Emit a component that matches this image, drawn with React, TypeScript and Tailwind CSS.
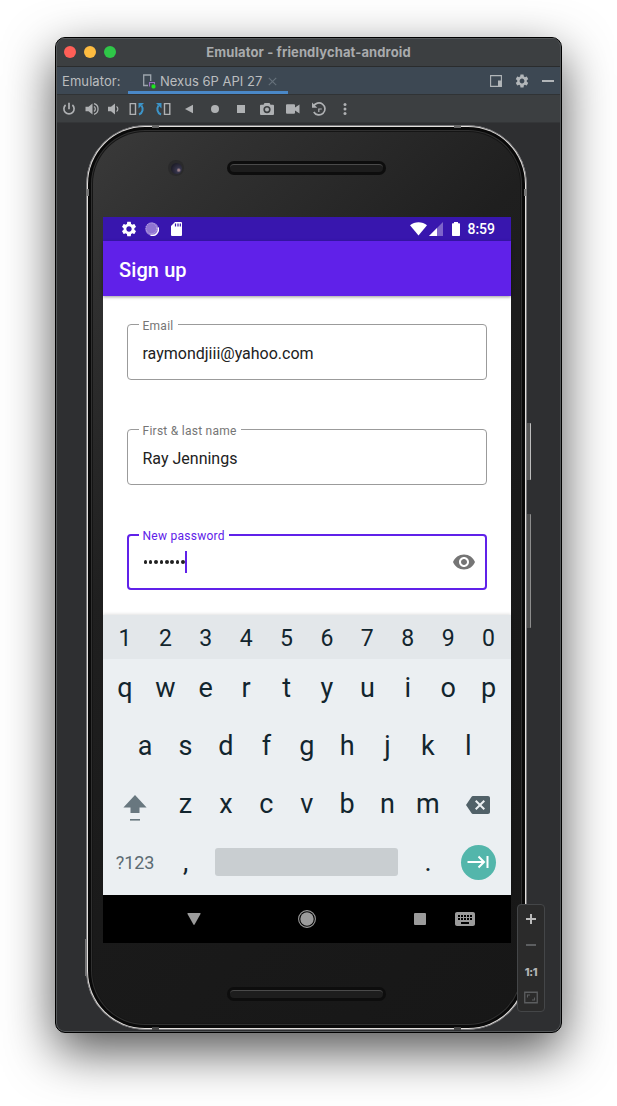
import type { ReactNode } from "react";
import { MdBackspace, MdKeyboard, MdSettings, MdVisibility } from "react-icons/md";

const inter = "font-['Inter','Liberation_Sans',sans-serif]";

function TitleBar() {
  return (
    <div className="flex h-[29px] shrink-0 items-center border-b border-[#2a2c2d] bg-[#3c3f41] shadow-[inset_0_1px_0_#55585a]">
      <div className="flex w-[68px] gap-2 pl-2">
        <span className="size-3 rounded-full bg-[#ff5f57]" />
        <span className="size-3 rounded-full bg-[#febc40]" />
        <span className="size-3 rounded-full bg-[#2fc748]" />
      </div>
      <div className="flex-1 pr-[68px] text-center text-[13px] leading-none font-bold tracking-[0.12px] whitespace-nowrap text-[#a9abad]">
        Emulator - friendlychat-android
      </div>
    </div>
  );
}

function TabBar() {
  return (
    <div className="flex h-[28px] shrink-0 items-center border-b border-[#303335] bg-[#3d4853] text-[13px] text-[#bbbdbf]">
      <span className="w-[72px] pt-[2px] pl-[6px] tracking-[0.08px]">Emulator:</span>
      <div className="flex h-full w-[160px] items-center border-b-[3px] border-[#4a88c7] pt-[5px] pl-[15px]">
        <svg width="13" height="15" viewBox="0 0 13 15" className="shrink-0">
          <path d="M5 11.5H.7V1h7v6" fill="none" stroke="#9da5ad" strokeWidth="1.3" />
          <path d="M6.5 12.5v-4h5v2" fill="none" stroke="#9a70c0" strokeWidth="1.1" />
          <rect x="8.5" y="10.5" width="4" height="4" rx="1.4" fill="#1ee61e" />
        </svg>
        <span className="ml-[4px] w-[103px] tracking-[0.01px] whitespace-nowrap">Nexus 6P API 27</span>
        <svg width="9" height="9" viewBox="0 0 8 8" className="ml-[5px]">
          <path d="M.7.7l6.6 6.6M7.3.7L.7 7.3" stroke="#66717b" strokeWidth="1" />
        </svg>
      </div>
      <div className="ml-auto flex items-center gap-[12px] pt-px pr-[7px]">
        <svg width="12" height="12" viewBox="0 0 12 12">
          <path d="M.6.6h10.8v10.8H.6z" fill="none" stroke="#b2b6b9" strokeWidth="1.1" />
          <path d="M8 5.5h3.5v6H8z" fill="#b2b6b9" />
        </svg>
        <MdSettings className="size-[16px] text-[#b2b6b9]" />
        <svg width="12" height="12" viewBox="0 0 12 12">
          <path d="M0 5h12v2H0z" fill="#b2b6b9" />
        </svg>
      </div>
    </div>
  );
}

function Tool({ children, gap = "w-[26px]" }: { children: ReactNode; gap?: string }) {
  return (
    <span className={`${gap} flex shrink-0 justify-center`}>
      <svg width="16" height="16" viewBox="0 0 16 16" fill="none" stroke="#afb1b3" strokeWidth="1.5">
        {children}
      </svg>
    </span>
  );
}

function Toolbar() {
  return (
    <div className="flex h-[28px] shrink-0 items-center border-b border-[#343638] bg-[#3c3f41]">
      <Tool>
        <path d="M4.600 4A5.100 5.100 0 1 0 11.400 4M8 1.800v6.400" strokeWidth="1.7" />
      </Tool>
      <Tool gap="w-[19px]">
        <path d="M1.500 5.800h3L8.500 2.500v11L4.500 10.200H1.500z" fill="#afb1b3" stroke="none" />
        <path d="M10 5.500a3 3 0 0 1 0 5M10 2.700a5.500 5.500 0 0 1 0 10.600" strokeWidth="1.3" />
      </Tool>
      <Tool gap="w-[24px]">
        <path d="M3 5.800h3L10 2.500v11L6 10.200H3z" fill="#afb1b3" stroke="none" />
        <path d="M11.500 5.500a3 3 0 0 1 0 5" strokeWidth="1.2" />
      </Tool>
      <Tool gap="w-[23px]">
        <path d="M1.200 2.600h5.300v10.800H1.200z" strokeWidth="1.4" />
        <path d="M10 13.500c4-1.500 4.500-6 2.500-9" stroke="#3c94c8" strokeWidth="2" />
        <path d="M9.500 2H15l-5.500 5.500z" fill="#3c94c8" stroke="none" />
      </Tool>
      <Tool gap="w-[30px]">
        <path d="M9.500 2.600h5.300v10.800H9.500z" strokeWidth="1.4" />
        <path d="M6 13.500C2 12 1.500 7.500 3.500 4.500" stroke="#3c94c8" strokeWidth="2" />
        <path d="M6.500 2H1l5.500 5.500z" fill="#3c94c8" stroke="none" />
      </Tool>
      <Tool gap="w-[21px]">
        <path d="M12 3.800v8.400L4 8z" fill="#afb1b3" stroke="none" />
      </Tool>
      <Tool gap="w-[31px]">
        <circle cx="8" cy="8" r="4" fill="#afb1b3" stroke="none" />
      </Tool>
      <Tool gap="w-[21px]">
        <path d="M4 4h8v8H4z" fill="#afb1b3" stroke="none" />
      </Tool>
      <Tool gap="w-[31px]">
        <path
          fillRule="evenodd"
          fill="#afb1b3"
          stroke="none"
          d="M5.500 2h5l1 1.800H14q1 0 1 1V13q0 1-1 1H2q-1 0-1-1V4.800q0-1 1-1h2.500zM8 5a3.600 3.600 0 1 0 0 7.200A3.600 3.600 0 0 0 8 5m0 1.600a2 2 0 1 1 0 4 2 2 0 0 1 0-4"
        />
      </Tool>
      <Tool gap="w-[21px]">
        <path d="M1 4.200q0-1 1-1h7q1 0 1 1v2.200l4.500-3v9.200l-4.500-3v2.200q0 1-1 1H2q-1 0-1-1z" fill="#afb1b3" stroke="none" />
      </Tool>
      <Tool gap="w-[31px]">
        <path d="M2.500 5.500A6 6 0 1 1 2.800 11" strokeWidth="1.7" />
        <path d="M1 1.500v5.300h5.300z" fill="#afb1b3" stroke="none" />
        <path d="M7.800 11V8h3" strokeWidth="1.2" />
      </Tool>
      <Tool gap="w-[21px]">
        <g fill="#afb1b3" stroke="none">
          <circle cx="8" cy="3.5" r="1.5" />
          <circle cx="8" cy="8" r="1.5" />
          <circle cx="8" cy="12.5" r="1.5" />
        </g>
      </Tool>
    </div>
  );
}

function StatusBar() {
  return (
    <div className="flex h-6 items-center bg-[#3816ae] px-4 text-white">
      <MdSettings className="ml-[1px] size-[18px]" />
      <svg width="14" height="14" viewBox="0 0 14 14" className="ml-[7px]">
        <circle cx="7" cy="7" r="6.6" fill="#8f74d2" />
        <circle cx="6.3" cy="6.3" r="5.4" fill="none" stroke="#c3b3e8" strokeWidth="1" strokeDasharray="1 1" />
        <path d="M13.2 5.500A6.200 6.200 0 0 1 5.500 13.200" fill="none" stroke="#fff" strokeWidth="1.4" />
      </svg>
      <svg width="11" height="14" viewBox="0 0 11 14" className="ml-[12px]">
        <path d="M4 0h6q1 0 1 1v12q0 1-1 1H1q-1 0-1-1V4z" fill="#fff" />
        <path d="M4.500 1.500v3M7 1.500v3M9.300 1.500v3" stroke="#3816ae" strokeWidth="1.2" />
      </svg>
      <svg width="17" height="14" viewBox="0 0 17 14" className="ml-auto">
        <path d="M0 3.200C4.500-.8 12.500-.8 17 3.200L8.500 13.600z" fill="#fff" />
      </svg>
      <svg width="14" height="14" viewBox="0 0 14 14" className="ml-[2px]">
        <path d="M14 0v14H0z" fill="#7d64ca" />
        <path d="M8 6v8H0z" fill="#fff" />
      </svg>
      <svg width="8" height="14" viewBox="0 0 8 14" className="ml-[9px]">
        <path d="M2 0h4v1.200h1.300q.7 0 .7.700v11.400q0 .7-.7.700H.7q-.7 0-.7-.7V1.900q0-.7.700-.7H2z" fill="#fff" />
      </svg>
      <span className="ml-[7.5px] text-[14px] leading-none font-medium">8:59</span>
    </div>
  );
}

function Field({ label, focused, children }: { label: string; focused?: boolean; children: ReactNode }) {
  return (
    <div
      className={`relative flex h-14 items-center rounded-[4px] text-[16px] text-[#212121] ${
        focused ? "border-2 border-[#6021e9] px-[14px]" : "border border-[#9b9b9b] pr-[15px] pl-[14.5px]"
      }`}
    >
      <span
        className={`absolute bg-white px-1 text-[12px] leading-[16px] tracking-[0.26px] whitespace-nowrap ${
          focused ? "top-[-8px] left-[9.5px] text-[#6021e9]" : "top-[-7px] left-[10.5px] text-[#757575]"
        }`}
      >
        {label}
      </span>
      {children}
    </div>
  );
}

function Keys({ keys }: { keys: string }) {
  return (
    <>
      {keys.split("").map((k) => (
        <span key={k} className="w-[40.4px] text-center">
          {k}
        </span>
      ))}
    </>
  );
}

function Keyboard() {
  const row = "flex h-[58px] items-center justify-center pr-[0.5px] text-[27px] leading-none";
  return (
    <div className="h-[280px] bg-[#ebeff2] text-[#12252e] shadow-[0_-1px_3px_rgba(0,0,0,0.12)]">
      <div className="flex h-[44px] items-center justify-center bg-[#e3e7ea] pt-[3px] pr-[0.5px] text-[23px] leading-none">
        <Keys keys="1234567890" />
      </div>
      <div className={row}>
        <Keys keys="qwertyuiop" />
      </div>
      <div className={row}>
        <Keys keys="asdfghjkl" />
      </div>
      <div className={row}>
        <span className="flex w-[60.6px] justify-center">
          <svg width="24" height="28" viewBox="0 0 24 28" className="mt-[7px]">
            <path d="M12 1l11.6 12.500H16.500V19h-9v-5.500H.4z" fill="#68777f" />
            <path d="M7 25h10v1.600H7z" fill="#68777f" />
          </svg>
        </span>
        <Keys keys="zxcvbnm" />
        <span className="flex w-[60.6px] justify-center pt-[2px]">
          <MdBackspace className="size-[24px] text-[#516168]" />
        </span>
      </div>
      <div className={row}>
        <span className="w-[60.6px] pt-px text-center text-[18px] text-[#5b6b73]">?123</span>
        <Keys keys="," />
        <span className="flex w-[202px] justify-center">
          <span className="mr-px h-7 w-[183px] rounded-[3px] bg-[#c9ced1]" />
        </span>
        <Keys keys="." />
        <span className="flex w-[60.6px] justify-center">
          <span className="flex size-[35px] items-center justify-center rounded-full bg-[#53b6ab]">
            <svg width="22" height="14" viewBox="0 0 22 14" fill="none" stroke="#fff" strokeWidth="2">
              <path d="M.5 7H17M11.500 1.500L17 7l-5.500 5.500M20.500 1v12" />
            </svg>
          </span>
        </span>
      </div>
    </div>
  );
}

function NavBar() {
  return (
    <div className="flex h-12 items-center bg-black">
      <svg width="14" height="12" viewBox="0 0 14 12" className="ml-[84px]">
        <path d="M1 0h12q1 0 .5 1L7.600 11.500q-.6.8-1.200 0L.5 1Q0 0 1 0" fill="#9b9b9b" />
      </svg>
      <svg width="18" height="18" viewBox="0 0 18 18" className="ml-[97px]">
        <circle cx="9" cy="9" r="8.4" fill="none" stroke="#9b9b9b" strokeWidth="1.1" />
        <circle cx="9" cy="9" r="6.7" fill="#9b9b9b" />
      </svg>
      <span className="ml-[98px] size-3 rounded-[1px] bg-[#9b9b9b]" />
      <MdKeyboard className="ml-[27px] size-6 text-[#9b9b9b]" />
    </div>
  );
}

function Screen() {
  return (
    <div className="flex h-[726px] w-[408px] shrink-0 flex-col bg-white font-['Roboto','Liberation_Sans',sans-serif]">
      <StatusBar />
      <div className="relative flex h-[55px] items-center bg-[#6021e9] pt-[2px] pl-4 text-[20px] font-medium tracking-[0.1px] text-white shadow-[0_1px_3px_rgba(0,0,0,0.4)]">
        Sign up
      </div>
      <div className="flex flex-1 flex-col gap-[49px] pt-[28px] pr-6 pl-6">
        <Field label="Email">
          <span className="pt-[3px]">raymondjiii@yahoo.com</span>
        </Field>
        <Field label="First & last name">
          <span className="pt-[3px]">Ray Jennings</span>
        </Field>
        <Field label="New password" focused>
          <span className="flex gap-[1.9px] pl-[0.5px]">
            {Array.from({ length: 8 }, (_, i) => (
              <i key={i} className="size-[3.5px] rounded-full bg-[#212121]" />
            ))}
          </span>
          <span className="ml-[0.5px] h-[22px] w-[2px] bg-[#6021e9]" />
          <MdVisibility className="mr-[-5px] ml-auto size-6 text-[#757575]" />
        </Field>
      </div>
      <Keyboard />
      <NavBar />
    </div>
  );
}

function Speaker() {
  return (
    <div className="h-[14px] w-[159px] rounded-full bg-[#0d0d0d] p-[3px]">
      <div className="h-full rounded-full border-t border-[#4a4a4a] bg-[#1d1d1d]" />
    </div>
  );
}

function Phone() {
  return (
    <div className="relative ml-[30px] h-[905px] w-[441px] rounded-[59px] border border-[#77777a] bg-[#e2dfdc] p-px">
      <span className="absolute top-[297px] right-[-5px] h-[57px] w-[4px] rounded-r-[1px] border-r border-[#bdbdbd] bg-[#555]" />
      <span className="absolute top-[388px] right-[-5px] h-[114px] w-[4px] rounded-r-[1px] border-r border-[#8d8d8d] bg-[#4c4c4c]" />
      <span className="absolute top-[813px] left-[-2px] h-[37px] w-px bg-[#777]" />
      <span className="absolute top-[-1px] left-[65px] h-[3px] w-[7px] bg-[#666]" />
      <span className="absolute top-[-1px] right-[65px] h-[3px] w-[7px] bg-[#666]" />
      <span className="absolute bottom-[-1px] left-[65px] h-[3px] w-[7px] bg-[#444]" />
      <span className="absolute right-[65px] bottom-[-1px] h-[3px] w-[7px] bg-[#444]" />
      <span className="absolute top-[63px] left-[-1px] h-[7px] w-[3px] bg-[#777]" />
      <span className="absolute top-[63px] right-[-1px] h-[7px] w-[3px] bg-[#777]" />
      <div className="h-full rounded-[57px] bg-[#090909] p-[3px]">
        <div className="h-full rounded-[54px] bg-[#303030] p-px">
          <div className="h-full rounded-[53px] bg-[#151515] p-px">
            <div className="relative flex h-full flex-col items-center rounded-[52px] bg-[linear-gradient(135deg,#3a3a3a_0%,#303030_12%,#1f1f1f_36%,#1a1a1a_60%,#171717_100%)] pt-[29px]">
              <span className="absolute top-[28px] left-[75px] flex size-[16px] items-center justify-center rounded-full bg-[#2a2a2b]">
                <span className="size-[11px] rounded-full bg-[radial-gradient(circle_at_70%_65%,#9a7f88_0_8%,#35344b_22%,#1f1e2a_70%)]" />
              </span>
              <Speaker />
              <div className="mt-[42px] ml-px">
                <Screen />
              </div>
              <div className="mt-[44px]">
                <Speaker />
              </div>
            </div>
          </div>
        </div>
      </div>
    </div>
  );
}

function ZoomControls() {
  return (
    <div className="absolute right-[16px] bottom-[20px] flex h-[108px] w-[28px] flex-col items-center justify-around rounded-[4px] border border-[#444648] bg-[#2b2b2b] pt-px">
      <svg width="16" height="16" viewBox="0 0 16 16">
        <path d="M8 3v10M3 8h10" stroke="#bbb" strokeWidth="2" />
      </svg>
      <svg width="16" height="16" viewBox="0 0 16 16">
        <path d="M3 8h10" stroke="#5c5e60" strokeWidth="2" />
      </svg>
      <span className="h-4 text-[11px] leading-4 font-extrabold tracking-[-0.3px] text-[#b4b4b4]">1:1</span>
      <svg width="16" height="16" viewBox="0 0 16 16" fill="none" stroke="#5c5e60">
        <path d="M1.750 2.250h12.500v10.500H1.750z" strokeWidth="1.3" />
        <path d="M4.500 7.500V5H7M11.500 7.500V10H9" strokeWidth="1.1" />
      </svg>
    </div>
  );
}

export default function App() {
  return (
    <main className={`h-[1106px] w-[617px] overflow-hidden bg-white pt-[37px] pl-[55px] ${inter}`}>
      <div className="h-[996px] w-[507px] rounded-[10px] shadow-[0_18px_50px_rgba(0,0,0,0.68)]">
        <div className="relative flex h-full flex-col overflow-hidden rounded-[10px] border border-black bg-[#2e2f31]">
          <TitleBar />
          <TabBar />
          <Toolbar />
          <div className="flex pt-[2px]">
            <Phone />
          </div>
          <ZoomControls />
          <div className="pointer-events-none absolute inset-0 rounded-[9px] border border-t-0 border-[#55585a]" />
        </div>
      </div>
    </main>
  );
}
